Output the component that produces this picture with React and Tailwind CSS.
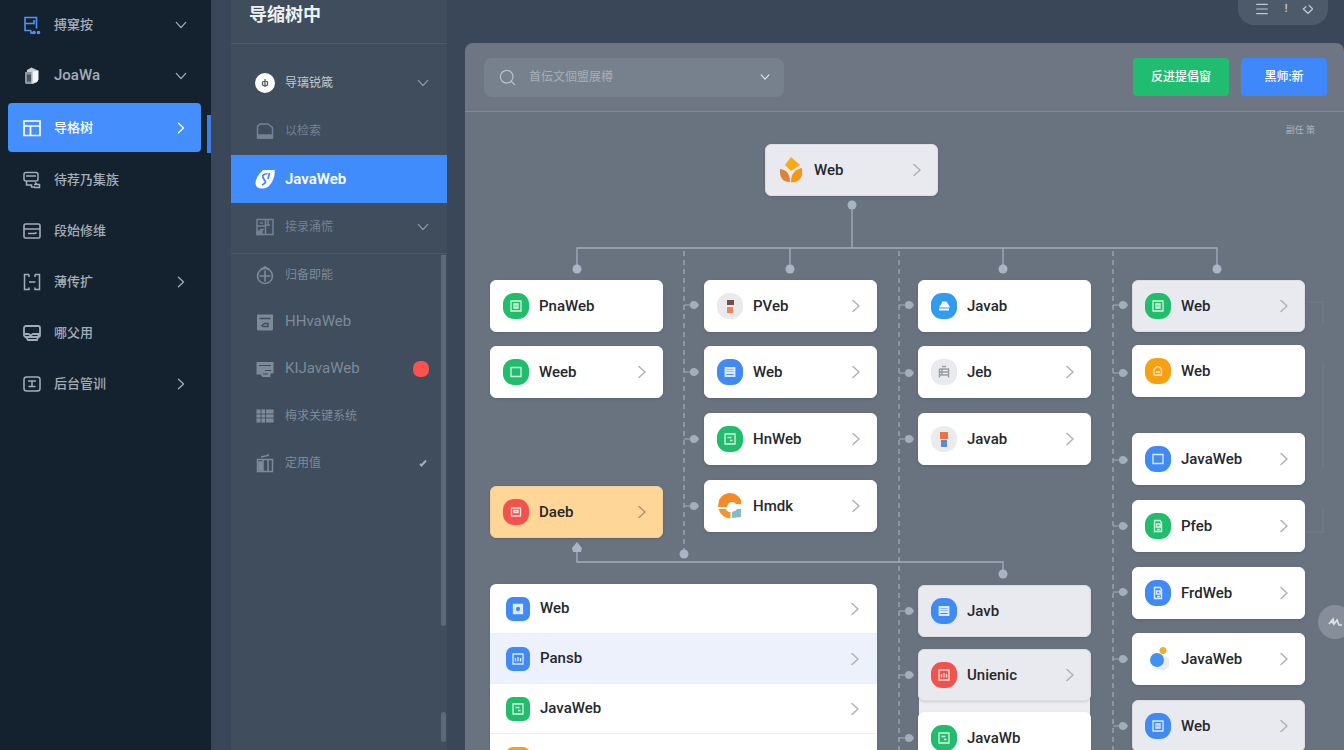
import React from 'react';
import { Menu, Search } from 'lucide-react';
import clsx from 'clsx';

const Chevron = ({ className, dir = 'right', size = 'h-3.5 w-3' }) => (
  <svg
    viewBox="0 0 12 14"
    fill="none"
    stroke="currentColor"
    strokeLinecap="round"
    strokeLinejoin="round"
    aria-hidden="true"
    className={clsx('shrink-0', size, dir === 'down' && 'rotate-90', className)}
  >
    <path d="M3 1.5 9 7l-6 5.5" strokeWidth="1.5" />
  </svg>
);

/* ---------- menu icons ---------- */

const menuGlyphs = {
  flow: (
    <g stroke="#4f94f5" strokeWidth="1.6">
      <path d="M3 8.5V2.5h11.5v11M3 8.500h9V5M3 8.500v7h6M9 15.500v2.500h3" />
      <circle cx="12" cy="17.500" r="1" fill="#4f94f5" />
      <circle cx="16.500" cy="17.500" r="1" fill="#4f94f5" />
    </g>
  ),
  pages: (
    <g stroke="none">
      <path d="M5 4 9.500 1.500 16 4.500V15l-5 3H4z" fill="#c9ced4" />
      <path d="M3 6h6.500v12H4.500A1.500 1.500 0 0 1 3 16.500z" fill="#8b939c" />
      <path d="M5 8.500h4v7H5z" fill="#4a535d" />
      <path d="M11 5.500 16.500 4.500v9l-2 3H11z" fill="#f4f6f8" />
    </g>
  ),
  layout: <path d="M2 3h16v14.500H2zM2 8h16M8.500 8v9.500" strokeWidth="1.700" />,
  chat: (
    <g strokeWidth="1.500">
      <rect x="2" y="2.500" width="14" height="8.500" rx="2" />
      <path d="M4 6h10M4.500 11v4h5v2H13M13 12.500l2 1.500M12 14.500h5.500v3H12" />
    </g>
  ),
  window: (
    <g strokeWidth="1.600">
      <rect x="2" y="3" width="16" height="14" rx="1.500" />
      <path d="M2 8h16M6 12.500h7l1.500-1" />
    </g>
  ),
  brackets: <path d="M7 2.500H2.500v15H7v-2M13 2.500h4.500v15H13v-2M7 5V2.500M13 5V2.500M7 10h6.500" strokeWidth="1.500" />,
  monitor: (
    <g strokeWidth="1.800">
      <rect x="2" y="3" width="16" height="11" rx="2" />
      <path d="M3 11h3.500l2 1.500L11 11h6l-2 6H6l-2-3" />
    </g>
  ),
  panel: (
    <g strokeWidth="1.500">
      <rect x="2" y="3" width="16" height="14" rx="2.500" />
      <path d="M6 7h8M10 7v5.500M6.500 12.500h7" />
    </g>
  ),
  coin: (
    <g stroke="none">
      <circle cx="10" cy="10" r="10" fill="#fff" />
      <path d="M10 6v8M7.500 9l2.500-1 2.500 1v3L10 13l-2.500-1z" stroke="#56616f" strokeWidth="1.300" />
    </g>
  ),
  drive: (
    <g strokeWidth="1.500">
      <path d="M2.500 5.500 5 3h8l4.500 3.500V17h-15z" />
      <path d="M3 14h14v3H3z" fill="currentColor" />
    </g>
  ),
  leaf: (
    <g stroke="none">
      <path d="M8 1h11.500q1 6-2.500 12T8 19.500Q1 20 .5 14.500T8 1" fill="#fff" />
      <path d="M12.500 4.500q-6 1-4.500 4t2.500 4-3.500 3.500M14.500 4l-1.500 6" stroke="#3f87f0" strokeWidth="1.700" />
    </g>
  ),
  board: (
    <g strokeWidth="1.500">
      <path d="M2 2.500h16v15H2zM10.500 3v14M2 9h8.500M5 6h3M5 12.500h4M11 8h4M13 3v6" />
      <path d="M2 14h5v3.500H2z" fill="currentColor" />
    </g>
  ),
  globe: (
    <g strokeWidth="1.600">
      <circle cx="10" cy="11" r="7.500" />
      <path d="M5.500 4.500 10 2l4.500 2.500M10 5.500v11M4.500 11h11" />
    </g>
  ),
  save: (
    <g stroke="none">
      <path d="M2 2.500h16V17a1.500 1.500 0 0 1-1.500 1.500h-13A1.500 1.500 0 0 1 2 17z" fill="currentColor" />
      <path d="M4.500 6.500h11M7 13.500l2.500-2h3.500v3H8z" stroke="#3f4d5e" strokeWidth="1.400" />
    </g>
  ),
  screen: (
    <g stroke="none">
      <path d="M1.500 3h17v11.500h-3V18H7.500l-2-2.500h-4z" fill="currentColor" />
      <path d="M4 6.500h12M10 11.500h6M8 15h5" stroke="#3f4d5e" strokeWidth="1.200" />
    </g>
  ),
  table: (
    <g stroke="none">
      <path d="M1.500 3.500h17v13h-17z" fill="currentColor" />
      <path d="M10.500 3v14M1.500 8h17M1.500 12h17M6 3v14" stroke="#3f4d5e" strokeWidth=".8" />
    </g>
  ),
  gift: (
    <g strokeWidth="1.500">
      <path d="M2.500 6.500h15v12h-15zM8 6.500v12M13 6.500v12M6 4l7-1.500V1" />
      <path d="M4 9h3v8H4z" fill="currentColor" />
    </g>
  ),
};

const MenuGlyph = ({ name }) => (
  <svg viewBox="0 0 20 20" fill="none" stroke="currentColor" aria-hidden="true" className="h-5 w-5 shrink-0">
    {menuGlyphs[name]}
  </svg>
);

/* ---------- node badges ---------- */

const badgeGlyphs = {
  grid: <path d="M2 2h10v10H2zM5 5h4v4H5zM7 5v4" />,
  box: <path d="M2 2.500h10v9H2z" />,
  mail: <path d="M2.500 3h9v8h-9zM5 5.500h4v2H5z" />,
  lines: <path d="M2.500 3h9v8h-9zM3 5.500h8M3 8h8" strokeWidth="1.800" />,
  note: <path d="M2 2h10v10H2zM4.500 5.500h4M7 8.500h2.500" />,
  cloud: <path d="M4 5.500h6M5 3.500h4l2.500 4H2.500M2 10.500h10" strokeWidth="1.800" />,
  store: <path d="M2.500 4h9v8.500M2.500 4v8.500M5 1.500h4M3 7h8M3 10h8M5 4v6" strokeWidth="1.500" />,
  bag: <path d="M3 11V5.500Q7 0 10.500 5.500V11zM5 8h4" />,
  doc: <path d="M3.500 1.500h5.500l1.500 2v9h-7zM5.500 5H9v3H5.500zM6 10.500h3" strokeWidth="1.400" />,
  dot: (
    <>
      <path d="M2.500 2.500h9v9h-9z" fill="currentColor" />
      <circle cx="7" cy="7" r="1.500" fill="#408af6" stroke="#408af6" />
    </>
  ),
  chart: <path d="M2 2h10v10H2zM4.500 9.500V6M7 9.500V5M9.500 9.500V6" />,
};

const tones = {
  green: 'bg-[#21bd6c] text-[#d3f8e2]',
  blue: 'bg-[#408af6] text-[#dceaff]',
  sky: 'bg-[#319af1] text-white',
  red: 'bg-[#f1524e] text-[#ffe0dc]',
  orange: 'bg-[#f6a114] text-[#ffe8b8]',
  gray: 'bg-[#e9ebee] text-[#9a9da2]',
};

const logos = {
  petals: (
    <>
      <path d="m13 0 9 8-9 6-6-6z" fill="#fbab12" />
      <path d="M2 12q10 1 10 13Q1 25 2 12" fill="#d9843a" />
      <path d="M24 11q-11 2-11 14.500Q26 25 24 11" fill="#f79516" />
    </>
  ),
  blocksDark: (
    <>
      <rect width="26" height="26" rx="12" fill="#e9eaed" />
      <path d="M10 7h7v5h-7z" fill="#7a4a4c" />
      <path d="M10 14h6v6h-6z" fill="#ef8354" />
    </>
  ),
  blocks: (
    <>
      <rect width="26" height="26" rx="12" fill="#e9ecef" />
      <path d="M9 6h8v7H9z" fill="#f1703d" />
      <path d="M10 14h6v7h-6z" fill="#5b8bc9" />
    </>
  ),
  ring: (
    <>
      <path d="M24 7Q20 0 13 0T2 7l-1 7h9q1-5 5-5 3 0 4 2h5z" fill="#f68a24" />
      <path d="M1.500 16q3 9 12 9.500V19q-4-.5-4.500-3z" fill="#ee9535" />
      <path d="M15 19q4-1 5-3h4v8l-9 1z" fill="#82bcc9" />
    </>
  ),
  comet: (
    <>
      <path d="M17 9 24 12v9l-6 4-9-3z" fill="#eaecf1" />
      <circle cx="12" cy="14" r="7" fill="#3f92f3" />
      <circle cx="18" cy="4.500" r="3.500" fill="#e8b134" />
    </>
  ),
};

const Badge = ({ icon, tone, square }) => {
  if (!tone) {
    return (
      <svg viewBox="0 0 26 26" aria-hidden="true" className="h-6.5 w-6.5 shrink-0">
        {logos[icon]}
      </svg>
    );
  }
  return (
    <span
      className={clsx(
        'flex shrink-0 items-center justify-center',
        square ? 'h-6 w-6 rounded-[7px]' : 'h-6.5 w-6.5 rounded-[11px]',
        tones[tone]
      )}
    >
      <svg viewBox="0 0 14 14" fill="none" stroke="currentColor" strokeWidth="1.3" aria-hidden="true" className="h-3.5 w-3.5">
        {badgeGlyphs[icon]}
      </svg>
    </span>
  );
};

/* ---------- data ---------- */

const mainMenu = [
  { label: '搏窠按', icon: 'flow', arrow: 'down' },
  { label: 'JoaWa', icon: 'pages', arrow: 'down' },
  { label: '导格树', icon: 'layout', arrow: 'right', active: true },
  { label: '待荐乃集族', icon: 'chat' },
  { label: '段始修维', icon: 'window' },
  { label: '薄传扩', icon: 'brackets', arrow: 'right' },
  { label: '哪父用', icon: 'monitor' },
  { label: '后台管训', icon: 'panel', arrow: 'right' },
];

const treeTop = [
  { label: '导璃锐箴', icon: 'coin', arrow: true, style: 'text-[#c3cad3]' },
  { label: '以检索', icon: 'drive', style: 'text-[#748293]' },
  { label: 'JavaWeb', icon: 'leaf', style: 'bg-[#418cfd] font-semibold text-white' },
  { label: '接录涌慌', icon: 'board', arrow: true, style: 'text-[#748293]' },
];

const treeBottom = [
  { label: '归备即能', icon: 'globe' },
  { label: 'HHvaWeb', icon: 'save' },
  { label: 'KIJavaWeb', icon: 'screen', alert: true },
  { label: '梅求关键系统', icon: 'table' },
  { label: '定用值', icon: 'gift', check: true },
];

// canvas coordinates of each node's top left corner
const nodes = [
  { x: 300, y: 32, label: 'Web', icon: 'petals', arrow: true, muted: true },
  { x: 25, y: 168, label: 'PnaWeb', icon: 'grid', tone: 'green' },
  { x: 25, y: 234, label: 'Weeb', icon: 'box', tone: 'green', arrow: true },
  { x: 25, y: 374, label: 'Daeb', icon: 'mail', tone: 'red', arrow: true, selected: true },
  { x: 239, y: 168, label: 'PVeb', icon: 'blocksDark', arrow: true },
  { x: 239, y: 234, label: 'Web', icon: 'lines', tone: 'blue', arrow: true },
  { x: 239, y: 301, label: 'HnWeb', icon: 'note', tone: 'green', arrow: true },
  { x: 239, y: 368, label: 'Hmdk', icon: 'ring', arrow: true },
  { x: 453, y: 168, label: 'Javab', icon: 'cloud', tone: 'sky' },
  { x: 453, y: 234, label: 'Jeb', icon: 'store', tone: 'gray', arrow: true },
  { x: 453, y: 301, label: 'Javab', icon: 'blocks', arrow: true },
  { x: 453, y: 473, label: 'Javb', icon: 'lines', tone: 'blue', muted: true },
  { x: 453, y: 537, label: 'Unienic', icon: 'chart', tone: 'red', arrow: true, muted: true },
  { x: 453, y: 600, label: 'JavaWb', icon: 'note', tone: 'green' },
  { x: 667, y: 168, label: 'Web', icon: 'grid', tone: 'green', arrow: true, muted: true },
  { x: 667, y: 233, label: 'Web', icon: 'bag', tone: 'orange' },
  { x: 667, y: 321, label: 'JavaWeb', icon: 'box', tone: 'blue', arrow: true },
  { x: 667, y: 388, label: 'Pfeb', icon: 'doc', tone: 'green', arrow: true },
  { x: 667, y: 455, label: 'FrdWeb', icon: 'doc', tone: 'blue', arrow: true },
  { x: 667, y: 521, label: 'JavaWeb', icon: 'comet', arrow: true },
  { x: 667, y: 588, label: 'Web', icon: 'grid', tone: 'blue', arrow: true, muted: true },
];

const listRows = [
  { label: 'Web', icon: 'dot', tone: 'blue' },
  { label: 'Pansb', icon: 'chart', tone: 'blue', active: true },
  { label: 'JavaWeb', icon: 'note', tone: 'green' },
  { label: 'JavaWeb', icon: 'bag', tone: 'orange' },
];

const dashed = [
  { x: 219, end: 442, stubs: [193, 260, 327, 394] },
  { x: 434, end: 660, stubs: [193, 261, 327, 499, 563, 626] },
  { x: 648, end: 660, stubs: [193, 261, 348, 414, 480, 547, 614] },
];

/* ---------- parts ---------- */

const Sidebar = () => (
  <nav className="w-[211px] shrink-0 overflow-hidden bg-[#142230]">
    <ul className="-mt-px px-2">
      {mainMenu.map(({ label, icon, arrow, active }) => (
        <li key={label} className="relative">
          <button
            type="button"
            className={clsx(
              'flex items-center gap-3 rounded pl-3.5 text-left text-[13px] font-medium',
              active
                ? 'my-0.5 h-[49px] w-[193px] bg-[#448efe] pr-3.5 text-white'
                : 'h-[51px] w-full pr-4 text-[#a4adb7]'
            )}
          >
            <MenuGlyph name={icon} />
            <span className={clsx('flex-1', label === 'JoaWa' && 'text-[15px]')}>{label}</span>
            {arrow && <Chevron dir={arrow} size="h-3 w-3" />}
          </button>
          {active && <span className="absolute top-3 -right-2 h-[38px] w-1 bg-[#3e80e0]" />}
        </li>
      ))}
    </ul>
  </nav>
);

const TreePanel = () => (
  <aside className="relative ml-5 w-[216px] shrink-0 overflow-hidden bg-[#3f4d5d]">
    <h2 className="h-11 border-b border-[#4b596a] pt-px pl-[18px] text-[18px] leading-7 font-bold text-[#eef1f4]">
      导缩树中
    </h2>
    <ul className="border-b border-[#4b596a] pt-[15px] pb-0.5">
      {treeTop.map(({ label, icon, arrow, style }) => (
        <li key={label}>
          <button type="button" className={clsx('flex h-12 w-full items-center gap-2.5 pr-[18px] pl-6 text-left', style)}>
            <MenuGlyph name={icon} />
            <span className={clsx('flex-1', label === 'JavaWeb' ? 'text-[15px]' : 'text-[12px]')}>{label}</span>
            {arrow && <Chevron dir="down" size="h-3 w-3" className="text-[#8d99a7]" />}
          </button>
        </li>
      ))}
    </ul>
    <ul className="flex flex-col gap-1.5">
      {treeBottom.map(({ label, icon, alert, check }) => (
        <li key={label}>
          <button type="button" className="flex h-[41px] w-full items-center gap-2.5 pr-[18px] pl-6 text-left text-[#7d8a98]">
            <MenuGlyph name={icon} />
            <span className={clsx('flex-1', label.endsWith('Web') ? 'text-[15px]' : 'text-[12px]')}>{label}</span>
            {alert && <span className="h-4 w-4 rounded-[7px] bg-[#fb524e]" />}
            {check && (
              <svg viewBox="0 0 12 12" fill="none" stroke="#a3aeb9" strokeWidth="2" aria-hidden="true" className="h-3 w-3">
                <path d="m3 7 1.500 1.500L9 3.500" />
              </svg>
            )}
          </button>
        </li>
      ))}
    </ul>
    {/* scrollbar */}
    <span className="absolute top-[255px] right-px h-[371px] w-[5px] rounded-b bg-[#5b6979]" />
    <span className="absolute top-[712px] right-px h-[30px] w-[5px] rounded bg-[#5b6979]" />
  </aside>
);

const Toolbar = () => (
  <div className="flex h-[69px] items-center gap-3 border-b border-[#7e8894] bg-[#6d7682] pr-[17px] pl-[19px]">
    <label className="flex h-[39px] w-[300px] items-center rounded-lg bg-[#77818e] pr-3.5 pl-3.5 text-[#b7bfc9]">
      <Search size={19} strokeWidth={1.6} aria-hidden="true" />
      <input
        type="text"
        aria-label="搜索"
        placeholder="首伝文個盟展樽"
        className="ml-3 min-w-0 flex-1 bg-transparent text-[12px] text-white outline-none placeholder:text-[#a5aeb9]"
      />
      <Chevron dir="down" size="h-2.5 w-2.5" className="text-[#e3e7eb]" />
    </label>
    <div className="flex-1" />
    <button type="button" className="h-[38px] w-24 rounded bg-[#20bd70] text-[12px] font-medium text-white">
      反进提倡窗
    </button>
    <button type="button" className="h-[38px] w-[86px] rounded bg-[#3f88fb] text-[12px] font-medium text-white">
      黑师:新
    </button>
  </div>
);

const Connectors = () => (
  <svg className="absolute top-0 left-0 h-[638px] w-[879px]" fill="none" stroke="#a3aebd" aria-hidden="true">
    <path d="M387 93v43M112 157v-21h640v21M325 136v21M538 136v21" strokeWidth="1.3" />
    <path d="M112 436v14h426v12" strokeWidth="1.3" />
    {dashed.map(({ x, end, stubs }) => (
      <g key={x}>
        <path d={`M${x} 139V${end}`} strokeDasharray="5 4" strokeWidth="1.2" />
        {stubs.map((y) => (
          <g key={y}>
            <path d={`M${x} ${y}h8`} />
            <path d={`M${x + 10} ${y - 4}q3 0 5 4-2 4-5 4a4 4 0 0 1 0-8`} fill="#a3aebd" stroke="none" />
          </g>
        ))}
      </g>
    ))}
    <g fill="#a9b4c5" stroke="none">
      <circle cx="387" cy="93" r="4.500" />
      <circle cx="112" cy="157" r="4.500" />
      <circle cx="325" cy="157" r="4.500" />
      <circle cx="538" cy="157" r="4.500" />
      <circle cx="752" cy="157" r="4.500" />
      <circle cx="219" cy="442" r="4.500" />
      <circle cx="538" cy="462" r="4.500" />
      <path d="m112 430 5 6-1 4h-8l-1-4z" />
    </g>
    <path d="M841 190h17v22M858 250v105M858 395v25h-17" stroke="#747f8c" />
  </svg>
);

const Node = ({ node }) => (
  <button
    type="button"
    style={{ left: node.x, top: node.y }}
    className={clsx(
      'absolute flex h-13 w-[173px] items-center gap-2.5 rounded-md border pr-3.5 pl-3 text-left text-[15px] font-medium text-[#25282c] shadow-sm',
      node.selected && 'border-[#f3cd93] bg-[#fed798]',
      node.muted && 'border-[#dcdee4] bg-[#e9eaef]',
      !node.selected && !node.muted && 'border-white bg-white'
    )}
  >
    <Badge icon={node.icon} tone={node.tone} />
    <span className="flex-1">{node.label}</span>
    {node.arrow && <Chevron className={node.selected ? 'text-[#b39468]' : 'text-[#afb1b5]'} />}
  </button>
);

const Canvas = () => (
  <div className="relative flex-1 overflow-hidden bg-[#69737f]">
    <span className="absolute top-3 right-[29px] text-[9px] text-[#aeb6c0]">副任 策</span>
    <Connectors />
    {/* backing of the stacked pair in the third column */}
    <div className="absolute top-[560px] left-[454px] h-[60px] w-[171px] bg-[#ededf1]" />
    {nodes.map((node) => (
      <Node key={`${node.x}-${node.y}`} node={node} />
    ))}
    <ul className="absolute top-[472px] left-[25px] w-[387px] overflow-hidden rounded-md bg-white shadow-sm">
      {listRows.map(({ label, icon, tone, active }, i) => (
        <li key={i} className="border-b border-[#eceef2]">
          <button
            type="button"
            className={clsx(
              'flex h-[49px] w-full items-center gap-2.5 px-4 text-left text-[15px] font-medium text-[#25282c]',
              active && 'bg-[#ecf1fc]'
            )}
          >
            <Badge icon={icon} tone={tone} square />
            <span className="flex-1">{label}</span>
            <Chevron className="text-[#afb1b5]" />
          </button>
        </li>
      ))}
    </ul>
    <button
      type="button"
      aria-label="助手"
      className="absolute top-[493px] -right-2 flex h-[34px] w-[34px] items-center justify-center rounded-full bg-[#858e99] text-[#dfe3e8]"
    >
      <svg viewBox="0 0 14 14" fill="none" stroke="currentColor" strokeWidth="1.600" aria-hidden="true" className="h-3.5 w-3.5">
        <path d="m1 9 4-5 1 5 3-4 2 5h3M3 6l3 3" />
      </svg>
    </button>
  </div>
);

const App = () => (
  <div className="flex h-screen overflow-hidden bg-[#3a4758] font-[Roboto,'Noto_Sans_CJK_SC',sans-serif]">
    <Sidebar />
    <TreePanel />
    <main className="ml-[18px] flex min-w-0 flex-1 flex-col">
      <header className="flex h-[43px] shrink-0 items-start justify-end pr-4">
        <div className="flex h-[25px] items-center gap-2.5 rounded-b-2xl bg-[#4d5a6a] pr-3.5 pb-2 pl-4 text-[#c0c8d1]">
          <button type="button" aria-label="菜单">
            <Menu size={16} strokeWidth={1.8} />
          </button>
          <span className="w-3 text-center text-[10px] font-bold">!</span>
          <button type="button" aria-label="刷新">
            <svg viewBox="0 0 14 14" fill="none" stroke="currentColor" strokeWidth="1.500" className="h-3 w-3">
              <path d="M5 4 1.500 7 7 12l5.500-5M8 2.500 12.500 7" />
            </svg>
          </button>
        </div>
      </header>
      <section className="flex min-h-0 flex-1 flex-col overflow-hidden rounded-t-lg">
        <Toolbar />
        <Canvas />
      </section>
    </main>
  </div>
);

export default App;
